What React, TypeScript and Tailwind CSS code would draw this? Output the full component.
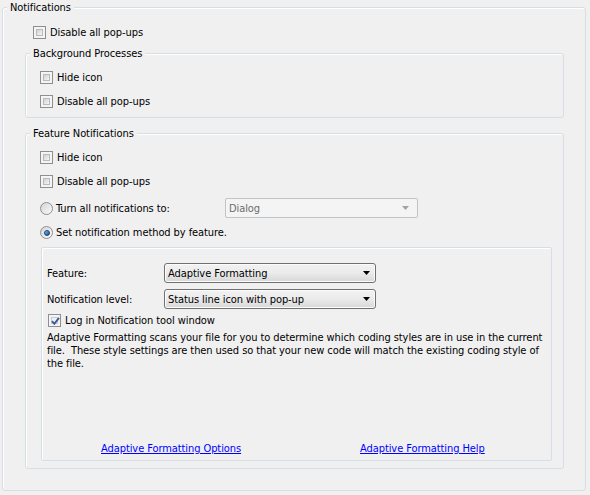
import React from 'react';

const font = { fontFamily: '"DejaVu Sans Condensed", "Liberation Sans", sans-serif' };

const CheckBox = ({ checked = false }: { checked?: boolean }) => (
  <span className="relative flex w-[13px] h-[13px] shrink-0 border border-[#8e8f8f] bg-[#f4f4f4] p-[2px]">
    <span className={`flex-1 border ${checked ? 'border-[#c6cbd4] bg-gradient-to-br from-[#e9ecf1] to-[#fbfbfb]' : 'border-[#b7babe] bg-gradient-to-br from-[#cfd1d4] to-[#f6f6f6]'}`} />
    {checked && (
      <svg className="absolute left-[1px] top-[1px]" width="11" height="11" viewBox="0 0 11 11">
        <path d="M2 5.2 L4.3 7.8 L9 1.8" fill="none" stroke="#3d5a9b" strokeWidth="1.9" />
      </svg>
    )}
  </span>
);

const Radio = ({ checked = false }: { checked?: boolean }) => (
  <span className="flex w-[13px] h-[13px] shrink-0 items-center justify-center rounded-full border border-[#8e8f8f] bg-gradient-to-br from-[#d2d4d6] to-[#fbfbfb]">
    {checked && (
      <span className="w-[6px] h-[6px] rounded-full border border-[#1b3f6e] bg-gradient-to-br from-[#7cc0f5] to-[#0d4f96]" />
    )}
  </span>
);

const CheckRow = ({ label, checked }: { label: string; checked?: boolean }) => (
  <div className="flex h-[13px] items-center">
    <CheckBox checked={checked} />
    <span className="ml-[4px] leading-[13px] whitespace-nowrap">{label}</span>
  </div>
);

const Arrow = ({ color }: { color: string }) => (
  <svg width="7" height="4" viewBox="0 0 7 4">
    <path d="M0 0 H7 L3.5 4 Z" fill={color} />
  </svg>
);

const Combo = ({ value, disabled }: { value: string; disabled?: boolean }) =>
  disabled ? (
    <div className="flex h-[20px] w-[193px] items-center justify-between rounded-[2px] border border-[#c2c5c8] bg-[#f4f4f4] pl-[3px] pr-[8px] text-[#6d6d6d]">
      <span className="leading-[13px]">{value}</span>
      <Arrow color="#a3a3a3" />
    </div>
  ) : (
    <div className="flex h-[20px] w-[212px] items-center justify-between rounded-[3px] border border-[#707070] bg-gradient-to-b from-[#f2f2f2] via-[#ebebeb] to-[#d7d7d7] pl-[3px] pr-[5px] shadow-[inset_0_0_0_1px_#fcfcfc]">
      <span className="leading-[13px]">{value}</span>
      <Arrow color="#000000" />
    </div>
  );

const Group = ({ title, className, children }: { title: string; className: string; children: React.ReactNode }) => (
  <div className={`relative rounded-[3px] border border-[#d5dfe5] shadow-[inset_1px_1px_0_#ffffff] ${className}`}>
    <span className="absolute left-[4px] top-[-8px] bg-[#f0f0f0] px-[3px] leading-[15px] whitespace-nowrap">{title}</span>
    {children}
  </div>
);

export default function App() {
  return (
    <div className="w-[590px] h-[495px] bg-[#f0f0f0] pt-[7px] pl-[2px] text-[11px] tracking-[-0.08px] text-black overflow-hidden" style={font}>
      <Group title="Notifications" className="w-[584px] h-[484px] flex flex-col">
        <div className="mt-[18px] pl-[30px]">
          <CheckRow label="Disable all pop-ups" />
        </div>

        <Group title="Background Processes" className="mt-[14px] ml-[22px] w-[539px] h-[65px] flex flex-col gap-[11px] pt-[17px] pl-[14px]">
          <CheckRow label="Hide icon" />
          <CheckRow label="Disable all pop-ups" />
        </Group>

        <Group title="Feature Notifications" className="mt-[15px] ml-[22px] w-[539px] h-[336px] flex flex-col pt-[17px] pl-[14px]">
          <CheckRow label="Hide icon" />
          <div className="mt-[11px]">
            <CheckRow label="Disable all pop-ups" />
          </div>
          <div className="mt-[10px] flex h-[20px] items-center">
            <Radio />
            <span className="ml-[3px] w-[169px] leading-[13px] whitespace-nowrap">Turn all notifications to:</span>
            <Combo value="Dialog" disabled />
          </div>
          <div className="mt-[8px] flex h-[13px] items-center">
            <Radio checked />
            <span className="ml-[3px] leading-[13px] whitespace-nowrap">Set notification method by feature.</span>
          </div>

          <div className="mt-[8px] ml-[1px] w-[511px] h-[214px] border border-[#d5dfe5] rounded-[2px] shadow-[inset_1px_1px_0_#ffffff] flex flex-col pl-[5px] pt-[15px]">
            <div className="flex h-[20px] items-center">
              <span className="w-[117px] leading-[13px]">Feature:</span>
              <Combo value="Adaptive Formatting" />
            </div>
            <div className="mt-[6px] flex h-[20px] items-center">
              <span className="w-[117px] leading-[13px]">Notification level:</span>
              <Combo value="Status line icon with pop-up" />
            </div>
            <div className="mt-[5px] ml-[1px]">
              <CheckRow label="Log in Notification tool window" checked />
            </div>
            <div className="mt-[4px] leading-[13px] whitespace-nowrap">
              <div>Adaptive Formatting scans your file for you to determine which coding styles are in use in the current</div>
              <div>file.&nbsp; These style settings are then used so that your new code will match the existing coding style of</div>
              <div>the file.</div>
            </div>
            <div className="mt-auto mb-[5px] flex pl-[54px] leading-[13px]">
              <span className="w-[259px]">
                <a className="text-[#0000ff] underline" href="#">Adaptive Formatting Options</a>
              </span>
              <a className="text-[#0000ff] underline" href="#">Adaptive Formatting Help</a>
            </div>
          </div>
        </Group>
      </Group>
    </div>
  );
}
